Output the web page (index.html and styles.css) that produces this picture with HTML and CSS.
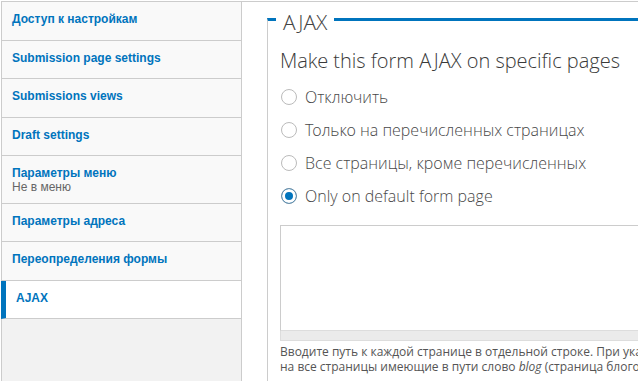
FILE: index.html
```html
<!DOCTYPE html>
<html lang="ru">
<head>
  <meta charset="UTF-8" />
  <meta name="viewport" content="width=device-width, initial-scale=1.0" />
  <title>Параметры формы</title>
  <link rel="stylesheet" href="styles.css">
</head>
<body>
  <div class="vertical-tabs">
    <ul class="tabs-menu">
      <li class="tabs-item"><a href="#">Доступ к настройкам</a></li>
      <li class="tabs-item"><a href="#">Submission page settings</a></li>
      <li class="tabs-item"><a href="#">Submissions views</a></li>
      <li class="tabs-item"><a href="#">Draft settings</a></li>
      <li class="tabs-item">
        <a href="#">Параметры меню</a>
        <span class="tabs-summary">Не в меню</span>
      </li>
      <li class="tabs-item"><a href="#">Параметры адреса</a></li>
      <li class="tabs-item"><a href="#">Переопределения формы</a></li>
      <li class="tabs-item is-selected"><a href="#">AJAX</a></li>
    </ul>

    <div class="tabs-pane">
      <section class="fieldset">
        <h2 class="fieldset-legend"><span>AJAX</span></h2>
        <div class="fieldset-wrapper">
          <h3 class="form-title">Make this form AJAX on specific pages</h3>
          <div class="radios">
            <label class="radio"><input type="radio" name="ajax_pages"> Отключить</label>
            <label class="radio"><input type="radio" name="ajax_pages"> Только на перечисленных страницах</label>
            <label class="radio"><input type="radio" name="ajax_pages"> Все страницы, кроме перечисленных</label>
            <label class="radio"><input type="radio" name="ajax_pages" checked> Only on default form page</label>
          </div>
          <div class="resizable">
            <textarea class="form-textarea" rows="5"></textarea>
            <div class="grippie"></div>
          </div>
          <p class="description">
            Вводите путь к каждой странице в отдельной строке. При указании пути можно использовать символ «*». Например, <em>blog/*</em> указывает<br>
            на все страницы имеющие в пути слово <em>blog</em> (страница блогов и все отдельные записи блога).
          </p>
        </div>
      </section>
    </div>
  </div>
</body>
</html>
```

FILE: styles.css
```css
body {
  margin: 0;
  overflow: hidden;
  background-color: #fff;
  color: #333;
  font-family: "Open Sans", "Noto Sans", sans-serif;
}

.vertical-tabs {
  display: flex;
  width: 960px;
  height: 380px;
  padding: 1px 0 0 1px;
}

/* left menu */
.tabs-menu {
  flex: none;
  width: 239px;
  margin: 0;
  padding: 0;
  list-style: none;
  background-color: #f2f2f2;
  border: 1px solid #ccc;
  border-bottom: none;
  font-family: "Liberation Sans", Arial, sans-serif;
  font-size: 12px;
}
.tabs-item {
  padding: 8px 10px 11.5px;
  line-height: 18px;
  background-color: #f9f9f9;
  border-bottom: 1px solid #ccc;
  white-space: nowrap;
}
.tabs-item a {
  color: #0074bd;
  font-weight: bold;
  text-decoration: none;
}
.tabs-summary {
  display: block;
  margin: -2px 0 -4px;
  line-height: 15px;
  color: #666;
}
.tabs-item.is-selected {
  margin-left: -1px;
  border-left: 5px solid #0074bd;
  background-color: #fff;
}

/* right pane */
.tabs-pane {
  flex: 1;
  padding: 0 0 0 25px;
  border-top: 1px solid #ccc;
}
.fieldset {
  margin-top: 16px;
  border-top: 3px solid #0074bd;
  border-left: 1px solid #ccc;
  height: 400px;
}
.fieldset-legend {
  margin: -13px 0 0 8px;
  font-family: "Open Sans Light", "Open Sans", sans-serif;
  font-size: 21px;
  font-weight: 300;
  line-height: 29px;
  color: #444;
}
.fieldset-legend span {
  padding: 0 7px;
  background-color: #fff;
}
.fieldset-wrapper {
  padding-left: 12px;
}
.form-title {
  margin: 10px 0 0;
  font-family: "Open Sans Light", "Open Sans", sans-serif;
  font-size: 20px;
  font-weight: 300;
  line-height: 28px;
  color: #3a3a3a;
}

.radios {
  display: flex;
  flex-direction: column;
  gap: 11px;
  margin-top: 11px;
}
.radio {
  display: flex;
  align-items: center;
  gap: 8px;
  font-family: "Open Sans Light", "Open Sans", sans-serif;
  font-size: 16px;
  font-weight: 300;
  line-height: 22px;
  color: #484848;
}
.radio input {
  appearance: none;
  flex: none;
  width: 16px;
  height: 16px;
  margin: 0 0 0 1px;
  border: 1px solid #bbb;
  border-radius: 50%;
  background-color: #fff;
}
.radio input:checked {
  border-color: #6f8fa6;
  background-color: #0074bd;
  box-shadow: inset 0 0 0 3px #fff;
}

.resizable {
  margin-top: 18px;
  width: 640px;
}
.form-textarea {
  display: block;
  box-sizing: border-box;
  width: 100%;
  height: 106px;
  margin: 0;
  border: 1px solid #ccc;
  border-bottom-color: #ddd;
  resize: none;
}
.grippie {
  height: 9px;
  background-color: #ebebeb;
  border: 1px solid #ddd;
  border-top: none;
}
.description {
  margin: 3px 0 0;
  font-size: 12px;
  line-height: 15px;
  color: #555;
  white-space: nowrap;
}
```
